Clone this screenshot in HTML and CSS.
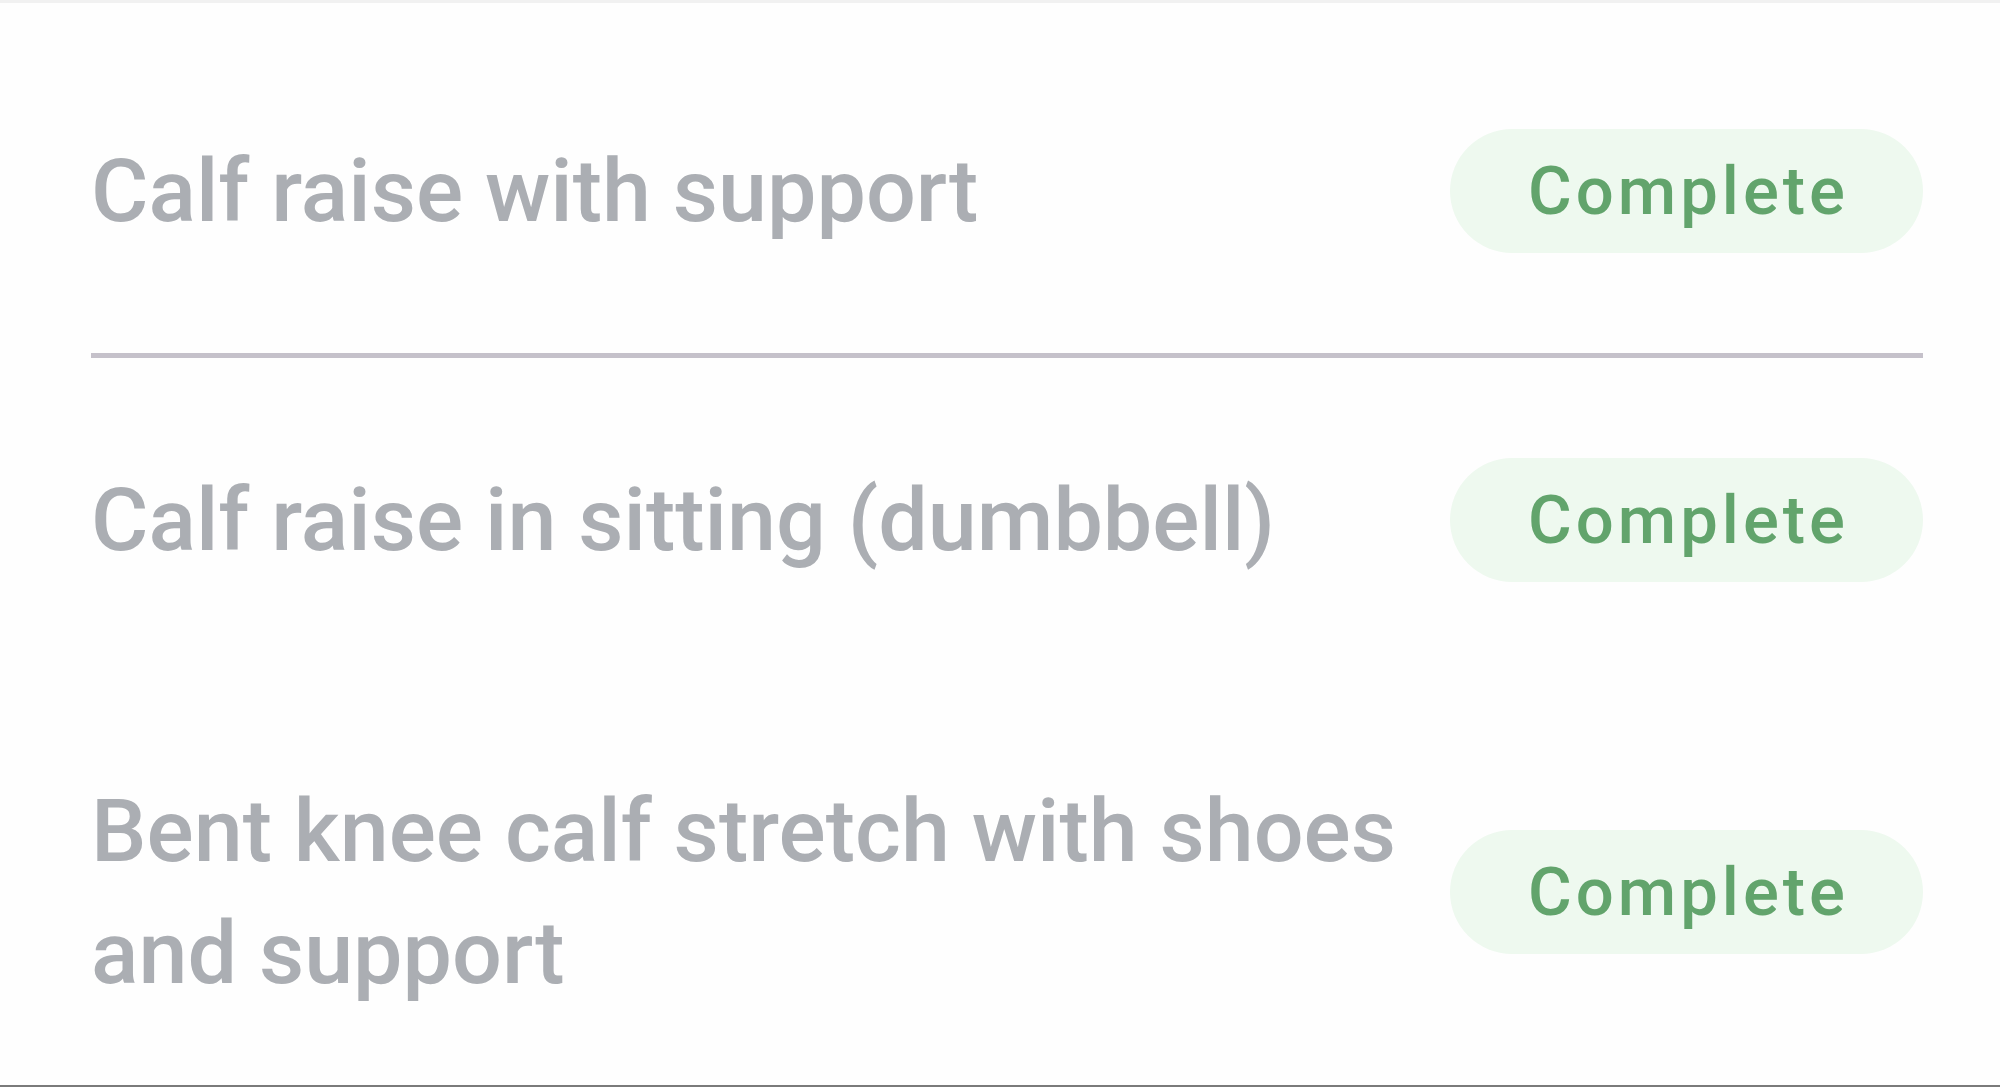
FILE: index.html
```html
<!DOCTYPE html>
<html lang="en">
<head>
<meta charset="utf-8">
<title>Exercises</title>
<link rel="stylesheet" href="styles.css">
</head>
<body>
<div class="screen">
  <div class="topline"></div>
  <ul class="list">
    <li class="row row-first">
      <span class="name">Calf raise with support</span>
      <span class="badge">Complete</span>
    </li>
    <li class="divider" aria-hidden="true"></li>
    <li class="row">
      <span class="name">Calf raise in sitting (dumbbell)</span>
      <span class="badge">Complete</span>
    </li>
    <li class="row row-last">
      <span class="name">Bent knee calf stretch with shoes and support</span>
      <span class="badge">Complete</span>
    </li>
  </ul>
  <div class="bottomline"></div>
</div>
</body>
</html>
```

FILE: styles.css
```css
html, body {
  margin: 0;
  padding: 0;
  background: #fefefe;
}

body {
  font-family: Roboto, "Noto Sans", "Liberation Sans", sans-serif;
}

.screen {
  height: 1087px;
  display: flex;
  flex-direction: column;
  overflow: hidden;
}

.topline {
  height: 3px;
  background: #f1f1f1;
  flex-shrink: 0;
}

.list {
  list-style: none;
  margin: 0;
  padding: 0 77px 0 91px;
}

.row {
  display: flex;
  align-items: center;
  gap: 24px;
  padding: 100px 0;
}

.row-first {
  padding-top: 126px;
}

.row-last {
  padding-top: 88px;
  padding-bottom: 0;
}

.name {
  flex: 1;
  font-size: 88px;
  line-height: 122px;
  color: #abaeb3;
  font-weight: 500;
}

.badge {
  flex-shrink: 0;
  box-sizing: border-box;
  width: 473px;
  height: 124px;
  padding-left: 4px;
  border-radius: 62px;
  background: #eef9ef;
  color: #62a46c;
  font-size: 67px;
  font-weight: 500;
  letter-spacing: 4px;
  display: flex;
  align-items: center;
  justify-content: center;
}

.divider {
  height: 5px;
  background: #c5c1ca;
}

.bottomline {
  margin-top: auto;
  height: 2px;
  background: #7a7a7a;
  flex-shrink: 0;
}
```
